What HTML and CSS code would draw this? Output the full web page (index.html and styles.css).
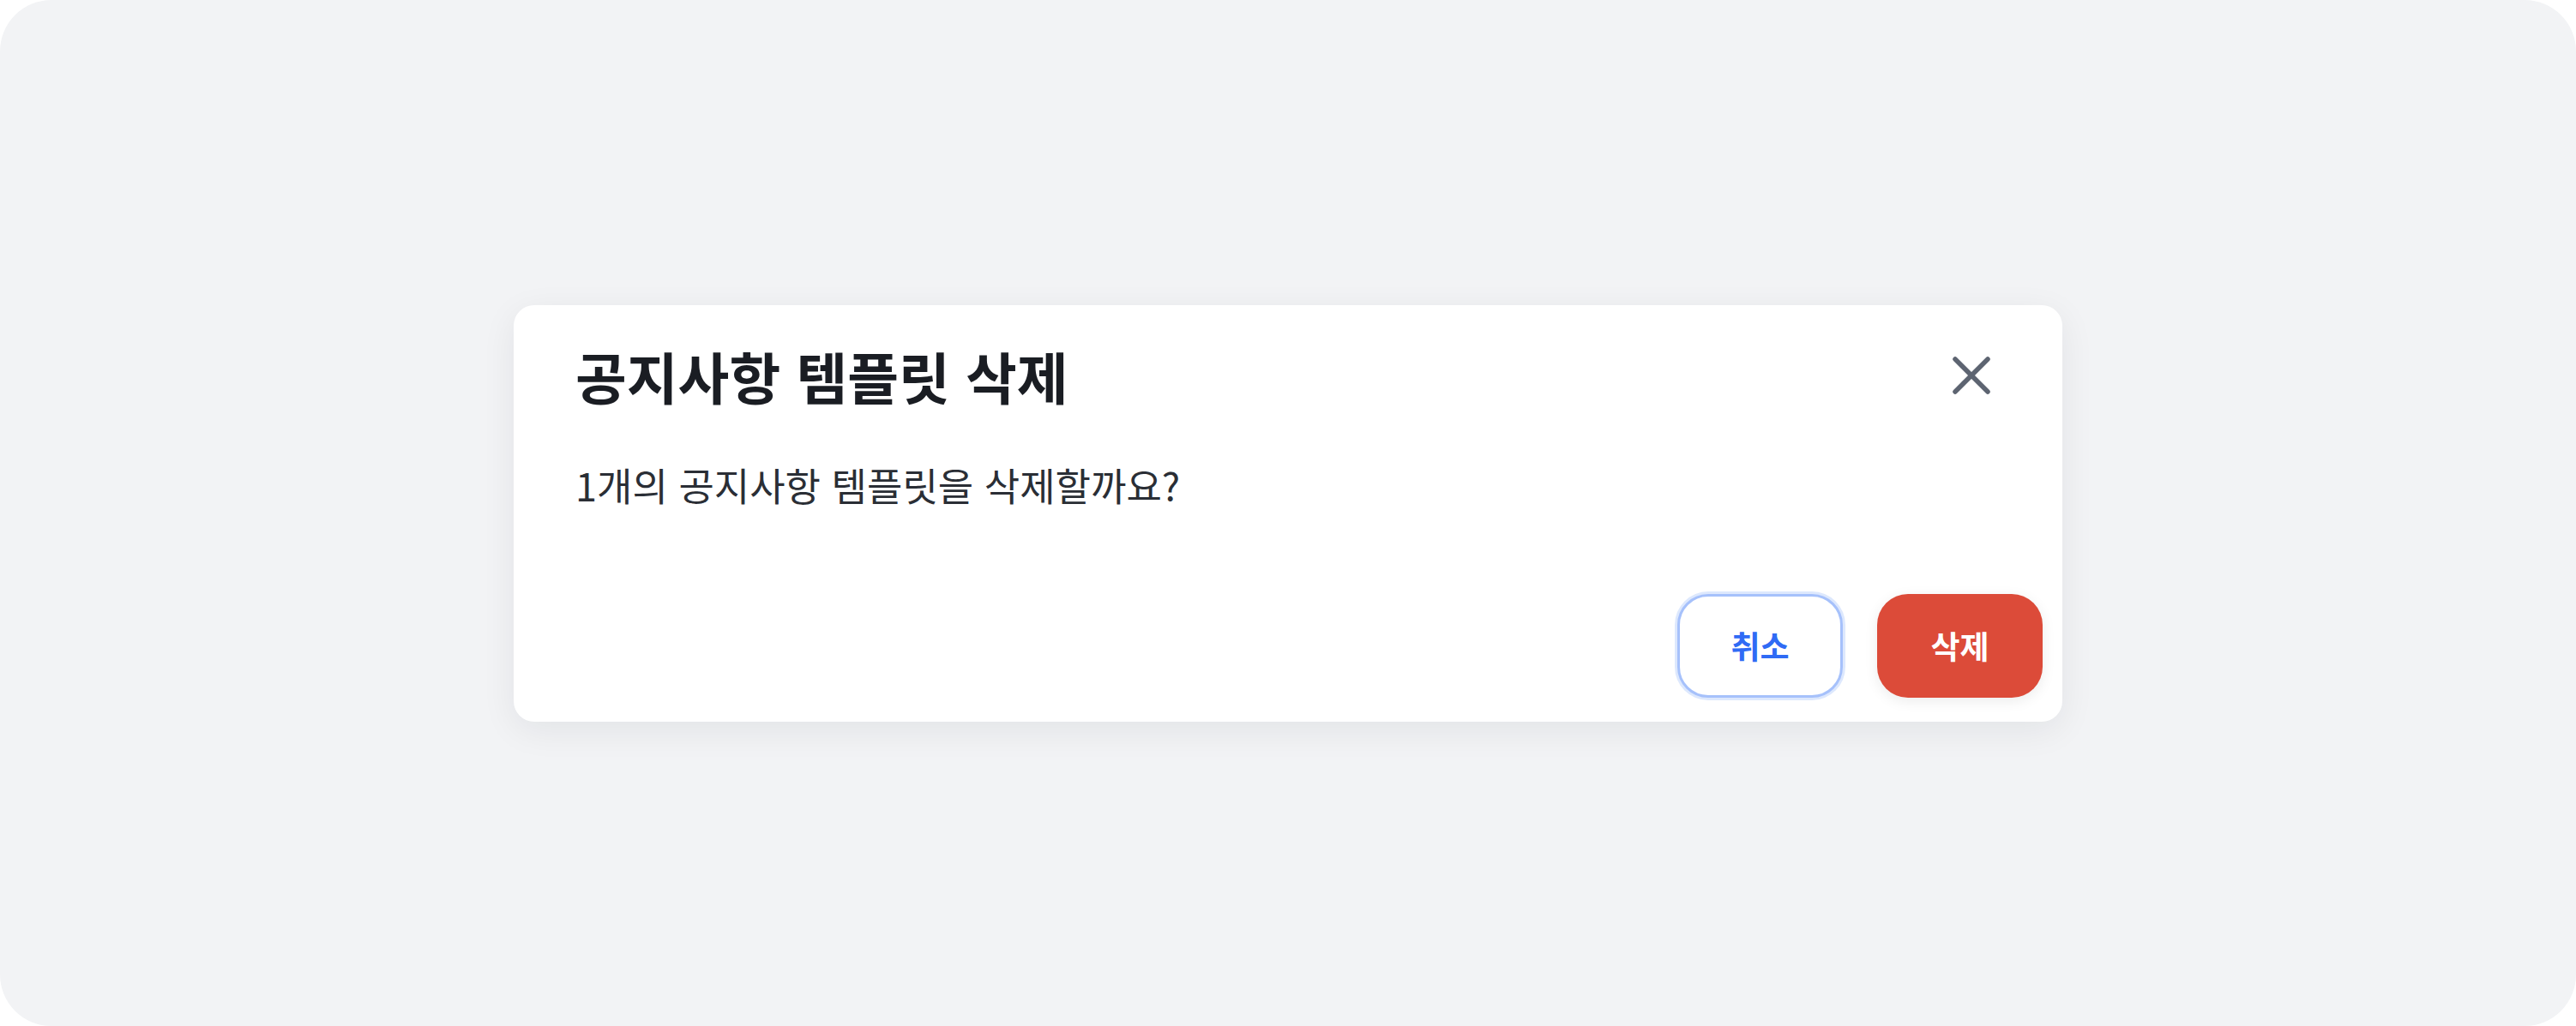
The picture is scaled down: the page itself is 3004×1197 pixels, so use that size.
FILE: index.html
```html
<!DOCTYPE html>
<html lang="ko">

<head>
  <meta charset="UTF-8" />
  <meta name="viewport" content="width=device-width, initial-scale=1.0" />
  <title>공지사항 템플릿 삭제</title>
  <link rel="stylesheet" href="styles.css">
</head>

<body>
  <div class="backdrop">
    <div class="dialog" role="dialog" aria-labelledby="dialogTitle">
      <div class="dialog-header">
        <h2 id="dialogTitle">공지사항 템플릿 삭제</h2>
        <button class="close-btn" aria-label="닫기">
          <svg viewBox="0 0 44 44" width="44" height="44">
            <path d="M3 3 L41 41 M41 3 L3 41" />
          </svg>
        </button>
      </div>

      <div class="dialog-body">
        <p>1개의 공지사항 템플릿을 삭제할까요?</p>
      </div>

      <div class="dialog-footer">
        <button class="btn btn-cancel">취소</button>
        <button class="btn btn-delete">삭제</button>
      </div>
    </div>
  </div>
</body>

</html>
```

FILE: styles.css
```css
html,
body {
  margin: 0;
  height: 100%;
  background-color: #fff;
  font-family: "Noto Sans CJK KR", "Noto Sans", sans-serif;
}

.backdrop {
  height: 100vh;
  background-color: #f2f3f5;
  border-radius: 60px;
  display: flex;
  align-items: center;
  justify-content: center;
}

.dialog {
  width: 1806px;
  background-color: #fff;
  border-radius: 24px;
  box-shadow: 0 10px 40px rgba(20, 24, 40, 0.07);
}

.dialog-header {
  display: flex;
  align-items: center;
  justify-content: space-between;
  padding: 42px 84px 0 72px;
}

.dialog-header h2 {
  margin: 0;
  font-size: 65px;
  line-height: 80px;
  font-weight: 700;
  color: #1a1d23;
}

.close-btn {
  width: 44px;
  height: 44px;
  padding: 0;
  border: none;
  background: none;
  display: flex;
}

.close-btn svg path {
  stroke: #5d6471;
  stroke-width: 5.5;
  stroke-linecap: round;
  fill: none;
}

.dialog-body {
  padding: 58px 72px 0;
}

.dialog-body p {
  margin: 0;
  font-size: 45px;
  line-height: 60px;
  color: #2a2e35;
}

.dialog-footer {
  display: flex;
  justify-content: flex-end;
  gap: 40px;
  padding: 97px 23px 28px;
}

.btn {
  width: 193px;
  height: 121px;
  border-radius: 36px;
  font-family: inherit;
  font-size: 37px;
  font-weight: 700;
}

.btn-cancel {
  background-color: #fff;
  border: 3px solid #a6c1fb;
  box-shadow: 0 0 0 3px rgba(66, 126, 246, 0.18);
  color: #2f6bf5;
}

.btn-delete {
  background-color: #dc4b39;
  border: none;
  color: #fff;
  box-shadow: 0 4px 16px rgba(0, 0, 0, 0.08);
}
```
